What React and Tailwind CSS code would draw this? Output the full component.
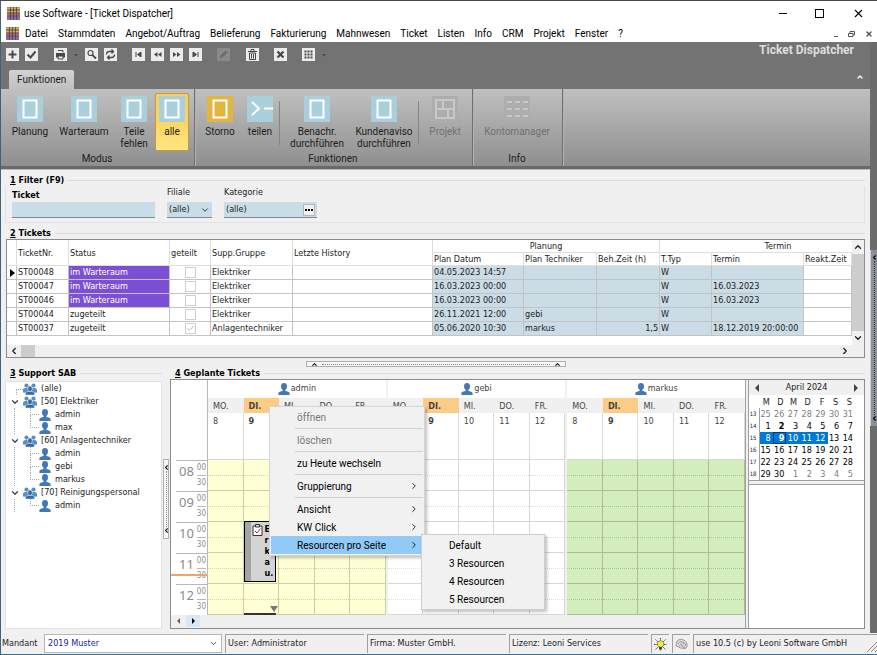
import React from 'react';
import { Check, X, ChevronDown, ChevronUp, ChevronLeft, ChevronRight } from 'lucide-react';

const MENU = ['Datei', 'Stammdaten', 'Angebot/Auftrag', 'Belieferung', 'Fakturierung', 'Mahnwesen', 'Ticket', 'Listen', 'Info', 'CRM', 'Projekt', 'Fenster', '?'];

const TICKETS = [
    { nr: 'ST00048', status: 'im Warteraum', group: 'Elektriker', date: '04.05.2023 14:57', type: 'W', current: true },
    { nr: 'ST00047', status: 'im Warteraum', group: 'Elektriker', date: '16.03.2023 00:00', type: 'W', due: '16.03.2023' },
    { nr: 'ST00046', status: 'im Warteraum', group: 'Elektriker', date: '16.03.2023 00:00', type: 'W', due: '16.03.2023' },
    { nr: 'ST00044', status: 'zugeteilt', group: 'Elektriker', date: '26.11.2021 12:00', tech: 'gebi', type: 'W' },
    { nr: 'ST00037', status: 'zugeteilt', shared: true, group: 'Anlagentechniker', date: '05.06.2020 10:30', tech: 'markus', hours: '1,5', type: 'W', due: '18.12.2019 20:00:00' },
];

const TREE = [
    { name: '(alle)' },
    { name: '[50] Elektriker', users: ['admin', 'max'] },
    { name: '[60] Anlagentechniker', users: ['admin', 'gebi', 'markus'] },
    { name: '[70] Reinigungspersonal', users: ['admin'] },
];

const HOURS = ['08', '09', '10', '11', '12'];
const DAYS = [['MO.', 8], ['DI.', 9], ['MI.', 10], ['DO.', 11], ['FR.', 12]];

const WEEKS = [
    [13, 25, 26, 27, 28, 29, 30, 31],
    [14, 1, 2, 3, 4, 5, 6, 7],
    [15, 8, 9, 10, 11, 12, 13, 14],
    [16, 15, 16, 17, 18, 19, 20, 21],
    [17, 22, 23, 24, 25, 26, 27, 28],
    [18, 29, 30, 1, 2, 3, 4, 5],
];

const AppIcon = () => (
    <svg viewBox="0 0 13 13" className="h-[13px] w-[13px] shrink-0">
        <rect width="13" height="13" fill="#8d7080" />
        <path d="M0 1.5h13M0 4.5h13" stroke="#d8b548" strokeWidth="2" />
        <path d="M0 7.5h13" stroke="#c4607a" strokeWidth="2" />
        <path d="M0 10.5h13" stroke="#8d6bb0" strokeWidth="2" />
        <path d="M3.5 0v13M6.5 0v13M9.5 0v13" stroke="#4a3f48" strokeWidth=".8" />
        <path d="M0 3h13M0 6h13M0 9h13" stroke="#4a3f48" strokeWidth=".6" />
    </svg>
);

const UserIcon = () => (
    <svg viewBox="0 0 12 12" className="h-3 w-3 shrink-0" fill="#4378b4">
        <ellipse cx="6" cy="3.4" rx="3" ry="3.4" />
        <path d="M4.6 6h2.8v2c1.8.4 4.2.9 4.2 2.2V12H.4v-1.8C.4 8.9 2.8 8.4 4.6 8z" />
    </svg>
);

const GroupIcon = () => (
    <svg viewBox="0 0 14 12" className="h-3 w-3.5 shrink-0">
        <g fill="#5b8fc4">
            <circle cx="3.5" cy="2.6" r="2.1" />
            <circle cx="10.5" cy="2.6" r="2.1" />
            <path d="M0 9.5V7c0-1.4 1.5-2 3.5-2l2 1v4zM14 9.5V7c0-1.4-1.5-2-3.5-2l-2 1v4z" />
        </g>
        <g fill="#35699f" stroke="#fff" strokeWidth=".4">
            <path d="M2.5 12v-1.5c0-1.5 2-2.1 4.5-2.1s4.5.6 4.5 2.1V12z" />
            <ellipse cx="7" cy="5.8" rx="2.2" ry="2.7" />
        </g>
    </svg>
);

const TOOL_ICONS = {
    plus: <path d="M6.5 2.5v8M2.5 6.5h8" strokeWidth="2" />,
    check: <path d="M2.5 6.5l3 3 5-6" strokeWidth="2" />,
    print: (
        <>
            <path d="M2 5h9v4.5H2z" fill="currentColor" stroke="none" />
            <path d="M4 2.5h5v2M4 8h5v3H4z" fill="#ececec" />
        </>
    ),
    search: (
        <>
            <circle cx="5.5" cy="5" r="2.5" strokeWidth="1.2" />
            <path d="M7.3 6.8l3.7 3.7" strokeWidth="1.8" />
        </>
    ),
    refresh: <path d="M2.5 6.5c0-2 1-3 3-3h4M7.500 1.500l2 2-2 2M10.500 6.500c0 2-1 3-3 3h-4M5.500 7.500l-2 2 2 2" strokeWidth="1.3" />,
    first: <path d="M4 4v5M9 4v5L5.500 6.500z" fill="currentColor" />,
    prev: <path d="M6.5 4v5L3 6.5zM10.5 4v5L7 6.5z" fill="currentColor" stroke="none" />,
    next: <path d="M3 4v5l3.5-2.5zM7 4v5l3.5-2.5z" fill="currentColor" stroke="none" />,
    last: <path d="M9 4v5M4 4v5l3.5-2.5z" fill="currentColor" />,
    edit: <path d="M3 10l1-2.5L8.5 3l1.500 1.500L5.500 9z" fill="currentColor" />,
    trash: <path d="M2 3.5h9M5 3V1.5h3V3M3.5 5v6.500h6V5zM5.500 6v4.500M7.500 6v4.500" />,
    close: <path d="M3.5 3.5l6 6M9.5 3.5l-6 6" strokeWidth="2.2" />,
    grid: <path d="M2.5 3.5h8M2.5 6.5h8M2.5 9.5h8" strokeWidth="1.8" strokeDasharray="2 1" />,
};

const ToolButton = ({ label, icon, disabled }) => (
    <button aria-label={label} disabled={disabled} className="bg-[#ececec] text-[#484848] disabled:bg-[#8a8a8a] disabled:text-[#6d6d6d]">
        <svg viewBox="0 0 13 13" fill="none" stroke="currentColor" className="h-[13px] w-[13px]">{TOOL_ICONS[icon]}</svg>
    </button>
);

const ToolArrow = () => (
    <svg viewBox="0 0 6 6" className="h-1.5 w-1.5"><path d="M1 2h4L3 4.5z" fill="#4a4a4a" /></svg>
);

const RibbonIcon = ({ kind }) => (
    <svg viewBox="0 0 26 26" className="h-[26px] w-[26px]">
        <rect width="26" height="26" fill={kind === 'gold' ? '#e3b541' : kind === 'grid' || kind === 'dots' ? '#adadad' : '#a9cfdc'} />
        {(kind === 'box' || kind === 'gold') && <rect x="6.5" y="4.5" width="13" height="17" fill="none" stroke="#fff" strokeWidth="2" />}
        {kind === 'split' && <path d="M5 6l7 6.5L5 19M17 12.5h9" fill="none" stroke="#fff" strokeWidth="2" />}
        {kind === 'grid' && <path d="M4 4h18v18H4zM4 13h18M11 4v9M16 13v9" fill="none" stroke="#c8c8c8" strokeWidth="2" />}
        {kind === 'dots' && <path d="M3 6h21M3 13h21M3 20h21" fill="none" stroke="#c8c8c8" strokeWidth="2" strokeDasharray="5 3" />}
    </svg>
);

const RibbonButton = ({ width, kind = 'box', active, disabled, children }) => (
    <button disabled={disabled} className={`flex h-[58px] flex-col items-center border pt-0.5 leading-3 disabled:text-[#717171] ${width} ${active ? 'rounded-xs border-[#c49a3a] bg-linear-to-b from-[#f3cf6c] via-[#fdd562] to-[#ffe680]' : 'border-transparent'}`}>
        <RibbonIcon kind={kind} />
        <span className="mt-1">{children}</span>
    </button>
);

const RibbonGroup = ({ label, children }) => (
    <section className="flex flex-col border-r border-[#6e6e6e] pl-1 pr-[5px] pt-1 shadow-[1px_0_0_#b5b5b5]">
        <div className="flex">{children}</div>
        <div className="text-center leading-[15px]">{label}</div>
    </section>
);

const RibbonLine = () => <div className="mr-1 mt-2 h-11 border-r border-[#848484]" />;

const Legend = ({ nr, children }) => (
    <div className="flex items-center gap-1 leading-3">
        <h2 className="pl-[5px] font-bold text-black"><span className="underline">{nr}</span> {children}</h2>
        <div className="h-px flex-1 bg-[#dcdcdc]" />
    </div>
);

const FilterBar = () => (
    <section className="pl-1 pr-[5px] pt-1">
        <Legend nr="1">Filter (F9)</Legend>
        <div className="flex items-end gap-3 border-x border-b border-[#e2e2e2] px-1.5 pb-1">
            <label className="flex flex-col justify-end font-bold text-black">
                <span className="pb-px leading-3">Ticket</span>
                <input className="h-4 w-[143px] border-b border-[#7b8b95] bg-[#cadce6] px-1 font-normal outline-none" />
            </label>
            <label className="flex flex-col">
                <span className="pb-1 leading-3">Filiale</span>
                <span className="relative flex">
                    <select className="h-4 w-[45px] appearance-none border-b border-[#7b8b95] bg-[#cadce6] pl-0.5 outline-none">
                        <option>(alle)</option>
                    </select>
                    <ChevronDown size={10} className="pointer-events-none absolute right-0.5 top-[3px]" />
                </span>
            </label>
            <label className="flex flex-col">
                <span className="pb-1 leading-3">Kategorie</span>
                <span className="flex h-4 w-[93px] items-center border-b border-[#7b8b95] bg-[#cadce6] pr-0.5">
                    <input defaultValue="(alle)" className="min-w-0 flex-1 bg-transparent pl-0.5 outline-none" />
                    <button aria-label="Kategorie auswählen" className="flex h-3 w-3 items-center justify-center gap-px border border-[#b5b5b5] bg-[#f0f0f0]">
                        <i className="h-0.5 w-0.5 bg-black" />
                        <i className="h-0.5 w-0.5 bg-black" />
                        <i className="h-0.5 w-0.5 bg-black" />
                    </button>
                </span>
            </label>
        </div>
    </section>
);

const TH = ({ children, ...rest }) => (
    <th className="border-r border-b border-[#dedede] px-px text-left font-normal" {...rest}>{children}</th>
);

const TicketTable = () => (
    <section className="pl-1 pr-[5px] pt-1">
        <Legend nr="2">Tickets</Legend>
        <div className="ml-px flex flex-col border border-[#8c8c8c] bg-white">
            <div className="flex h-[105px]">
                <div className="min-w-0 flex-1 overflow-hidden">
                    <table className="w-full table-fixed border-separate border-spacing-0 whitespace-nowrap">
                        <colgroup>
                            <col className="w-2.5" />
                            <col className="w-[52px]" />
                            <col className="w-[101px]" />
                            <col className="w-[41px]" />
                            <col className="w-[82px]" />
                            <col className="w-[140px]" />
                            <col className="w-[91px]" />
                            <col className="w-[73px]" />
                            <col className="w-[63px]" />
                            <col className="w-[52px]" />
                            <col className="w-[92px]" />
                            <col />
                        </colgroup>
                        <thead className="leading-3">
                            <tr className="h-3">
                                <TH rowSpan={2} />
                                <TH rowSpan={2}>TicketNr.</TH>
                                <TH rowSpan={2}>Status</TH>
                                <TH rowSpan={2}>geteilt</TH>
                                <TH rowSpan={2}>Supp.Gruppe</TH>
                                <TH rowSpan={2}>Letzte History</TH>
                                <th colSpan={3} className="border-r border-b border-[#dedede] p-0 font-normal">Planung</th>
                                <th colSpan={3} className="border-b border-[#dedede] p-0 pl-11 font-normal">Termin</th>
                            </tr>
                            <tr className="h-3">
                                <TH>Plan Datum</TH>
                                <TH>Plan Techniker</TH>
                                <TH>Beh.Zeit (h)</TH>
                                <TH>T.Typ</TH>
                                <TH>Termin</TH>
                                <TH>Reakt.Zeit</TH>
                            </tr>
                        </thead>
                        <tbody className="leading-[13px] [&_td]:border-r [&_td]:border-b [&_td]:border-[#c3c3c3] [&_td]:px-px [&_td]:py-0">
                            {TICKETS.map((t) => (
                                <tr key={t.nr}>
                                    <td>{t.current && <svg viewBox="0 0 5 8" className="ml-0.5 h-2 w-[5px]"><path d="M0 0l5 4-5 4z" /></svg>}</td>
                                    <td>{t.nr}</td>
                                    <td className={t.status === 'zugeteilt' ? '' : 'bg-[#7c4fd6] text-white'}>{t.status}</td>
                                    <td>
                                        <span className="relative mx-auto flex h-[11px] w-[11px]">
                                            <input type="checkbox" aria-label={`${t.nr} geteilt`} defaultChecked={t.shared} className="h-[11px] w-[11px] appearance-none border border-[#cfcfcf] bg-white" />
                                            {t.shared && <Check size={9} className="pointer-events-none absolute left-px top-px text-[#9c9c9c]" />}
                                        </span>
                                    </td>
                                    <td>{t.group}</td>
                                    <td />
                                    <td className="bg-[#cadce6]">{t.date}</td>
                                    <td className="bg-[#cadce6]">{t.tech}</td>
                                    <td className="bg-[#cadce6] text-right">{t.hours}</td>
                                    <td className="bg-[#cadce6]">{t.type}</td>
                                    <td className="bg-[#cadce6]">{t.due}</td>
                                    <td />
                                </tr>
                            ))}
                        </tbody>
                    </table>
                </div>
                <div className="flex w-3 flex-col items-center bg-[#f0f0f0]">
                    <ChevronUp size={10} strokeWidth={3} className="my-0.5" />
                    <div className="w-full flex-1 bg-[#cdcdcd]" />
                    <ChevronDown size={10} strokeWidth={3} className="my-0.5" />
                </div>
            </div>
            <div className="flex h-3 items-center bg-[#f0f0f0] px-0.5">
                <ChevronLeft size={10} strokeWidth={3} />
                <div className="ml-0.5 h-full w-3.5 bg-[#cdcdcd]" />
                <ChevronRight size={10} strokeWidth={3} className="ml-auto mr-3" />
            </div>
        </div>
    </section>
);

const SupportTree = () => (
    <section className="flex w-[157px] flex-col">
        <Legend nr="3">Support SAB</Legend>
        <ul className="mt-0.5 flex-1 border border-[#e2e2e2] bg-white leading-[13px]">
            {TREE.map((g) => (
                <li key={g.name}>
                    <div className="flex items-center">
                        <span className="flex w-[17px] justify-center">
                            {g.users
                                ? <ChevronDown size={10} strokeWidth={3} className="text-[#444]" />
                                : <i className="mt-1.5 ml-2.5 h-1.5 w-2 border-t border-l border-dotted border-[#aaa]" />}
                        </span>
                        <GroupIcon />
                        <span className="ml-1">{g.name}</span>
                    </div>
                    {g.users && (
                        <ul className="ml-2 border-l border-dotted border-[#aaa] pl-[15px]">
                            {g.users.map((u, i) => (
                                <li key={u} className="flex items-center">
                                    <span className="flex h-[13px] w-[9px] flex-col">
                                        <i className="h-[7px] border-b border-l border-dotted border-[#aaa]" />
                                        {i < g.users.length - 1 && <i className="h-1.5 border-l border-dotted border-[#aaa]" />}
                                    </span>
                                    <UserIcon />
                                    <span className="ml-1">{u}</span>
                                </li>
                            ))}
                        </ul>
                    )}
                </li>
            ))}
        </ul>
    </section>
);

const Appointment = () => (
    <>
        <div className="absolute left-0 top-[61px] flex h-[61px] w-8 border border-black bg-[#d4d4d4] font-bold text-black">
            <div className="w-1.5 bg-[#a5a5a5]" />
            <svg viewBox="0 0 11 12" className="ml-px mt-0.5 h-3 w-[11px] shrink-0">
                <path d="M1 2h9v9.5H1z" fill="#fff" stroke="#333" />
                <path d="M3.5 .5h4v2.5h-4z" fill="#ddd" stroke="#333" />
                <path d="M3 7l2 2 3.5-4.5" fill="none" stroke="#b03030" />
            </svg>
            <div className="ml-0.5 w-2 pt-0.5 leading-[11px]">E<br />r<br />k<br />a<br />u.</div>
        </div>
        <div className="absolute bottom-0 left-0 h-0.5 w-8 bg-[#333]" />
        <svg viewBox="0 0 8 6" className="absolute bottom-[3px] left-[26px] h-1.5 w-2"><path d="M0 0h8L4 6z" fill="#777" /></svg>
    </>
);

const Resource = ({ name, cell, hourLine, halfLine, children }) => (
    <div className="flex min-w-0 flex-1 flex-col">
        <div className="flex h-[18px] items-center justify-center gap-px bg-white">
            <UserIcon />
            <span>{name}</span>
        </div>
        <div className="grid flex-1 grid-cols-5">
            {DAYS.map(([day, nr]) => (
                <div key={day} className="flex flex-col">
                    <div className={`h-[15px] pl-[5px] leading-4 ${nr === 9 ? 'bg-[#fccb85] font-bold' : 'bg-[#f0f0f0]'}`}>{day}</div>
                    <div className={`h-[47px] border-r border-b border-[#d9d9d9] bg-white pl-[5px] leading-4 ${nr === 9 ? 'font-bold' : ''}`}>{nr}</div>
                    <div className={`relative border-r ${cell} ${hourLine}`}>
                        {HOURS.map((h) => (
                            <div key={h} className={`h-[31px] border-b ${hourLine}`}>
                                <div className={`h-4 border-b border-dotted ${halfLine}`} />
                            </div>
                        ))}
                        {nr === 9 && children}
                    </div>
                </div>
            ))}
        </div>
    </div>
);

const TimeRuler = () => (
    <div className="flex w-[37px] flex-col border-r border-[#b8b8b8] bg-white text-[#8b8b8b]">
        <div className="h-20" />
        <div className="relative pl-[5px]">
            {HOURS.map((h) => (
                <div key={h} className="flex h-[31px] border-t border-[#b8b8b8] pl-[3px]">
                    <span className="font-['Noto_Sans',sans-serif] text-[13px] leading-5">{h}</span>
                    <span className="ml-auto pr-px text-[8px]">
                        <span className="block h-[15px] border-b border-[#b8b8b8] leading-[14px]">00</span>
                        <span className="block leading-[14px]">30</span>
                    </span>
                </div>
            ))}
            <div className="absolute left-0 top-[114px] h-0.5 w-full bg-[#f2a36c]" />
        </div>
    </div>
);

const Calendar = () => (
    <div className="flex w-[116px] flex-col border-l border-[#a0a0a0]">
        <div className="border-b border-[#a0a0a0] bg-white">
            <div className="flex h-[15px] items-center justify-between bg-[#f0f0f0] px-1.5">
                <button aria-label="Voriger Monat"><svg viewBox="0 0 4 8" className="h-2 w-1"><path d="M4 0v8L0 4z" fill="#444" /></svg></button>
                <span>April 2024</span>
                <button aria-label="Nächster Monat"><svg viewBox="0 0 4 8" className="h-2 w-1"><path d="M0 0v8l4-4z" fill="#444" /></svg></button>
            </div>
            <table className="w-[106px] table-fixed text-right leading-3 [&_td]:p-0 [&_td]:pr-0.5 [&_th]:p-0 [&_th]:pr-[3px] [&_th]:font-normal">
                <thead>
                    <tr className="h-[13px]">
                        <th className="w-2.5" />
                        {['M', 'D', 'M', 'D', 'F', 'S', 'S'].map((d, i) => <th key={i}>{d}</th>)}
                    </tr>
                </thead>
                <tbody>
                    {WEEKS.map(([week, ...days]) => (
                        <tr key={week} className="h-3">
                            <td className="border-r border-[#a0a0a0] text-[6px]">{week}</td>
                            {days.map((d, i) => {
                                const outside = (week === 13) || (week === 18 && d < 20);
                                const selected = week === 15 && d < 13;
                                return (
                                    <td key={i} className={`${outside ? 'text-[#808080]' : selected ? 'bg-[#0078d7] text-white' : 'text-black'} ${!outside && (d === 2 || d === 9) ? 'font-bold' : ''} ${d === 9 ? 'outline -outline-offset-1 outline-[#1b2f6b]' : ''}`}>{d}</td>
                                );
                            })}
                        </tr>
                    ))}
                </tbody>
            </table>
        </div>
        <div className="mt-[3px] flex-1 border-t border-[#a0a0a0] bg-white" />
    </div>
);

const MenuItem = ({ children, sub, active, disabled }) => (
    <button role="menuitem" disabled={disabled} className={`flex h-[18px] w-full items-center pl-[26px] pr-1 text-left disabled:text-[#777] ${active ? 'bg-[#91c9f7]' : ''}`}>
        {children}
        {sub && <ChevronRight size={10} className="ml-auto" />}
    </button>
);

const MenuLine = () => <div className="ml-6 h-[5px] py-0.5"><div className="h-px bg-[#d0d0d0]" /></div>;

const ContextMenu = () => (
    <div className="absolute left-[98px] top-[26px] font-['Roboto','Noto_Sans',sans-serif] text-[10px] text-black">
        <div role="menu" className="w-[156px] border border-[#d5d5d5] bg-[#f1f1f1] p-px shadow-[2px_2px_3px_rgba(0,0,0,0.25)]">
            <MenuItem disabled>öffnen</MenuItem>
            <MenuLine />
            <MenuItem disabled>löschen</MenuItem>
            <MenuLine />
            <MenuItem>zu Heute wechseln</MenuItem>
            <MenuLine />
            <MenuItem sub>Gruppierung</MenuItem>
            <MenuLine />
            <MenuItem sub>Ansicht</MenuItem>
            <MenuItem sub>KW Click</MenuItem>
            <MenuItem sub active>Resourcen pro Seite</MenuItem>
        </div>
        <div role="menu" className="absolute left-[152px] top-[128px] w-[124px] border border-[#cfcfcf] bg-[#f1f1f1] p-px shadow-[2px_2px_3px_rgba(0,0,0,0.25)]">
            <MenuItem>Default</MenuItem>
            <MenuItem>3 Resourcen</MenuItem>
            <MenuItem>4 Resourcen</MenuItem>
            <MenuItem>5 Resourcen</MenuItem>
        </div>
    </div>
);

const Scheduler = () => (
    <section className="flex min-w-0 flex-1 flex-col">
        <Legend nr="4">Geplante Tickets</Legend>
        <div className="relative flex flex-1 border border-[#8c8c8c] bg-[#f0f0f0]">
            <div className="flex min-w-0 flex-1 flex-col">
                <div className="flex text-[#444]">
                    <TimeRuler />
                    <div className="flex min-w-0 flex-1 gap-0.5">
                        <Resource name="admin" cell="bg-[#ffffd5]" hourLine="border-[#cfcfa6]" halfLine="border-[#d5d5ae]">
                            <Appointment />
                        </Resource>
                        <Resource name="gebi" cell="bg-white" hourLine="border-[#d6d6d6]" halfLine="border-[#dddddd]" />
                        <Resource name="markus" cell="bg-[#d4edbc]" hourLine="border-[#a9be95]" halfLine="border-[#a9be95]" />
                    </div>
                </div>
                <div className="flex h-3 items-center pl-1">
                    <button aria-label="Zurück" className="px-0.5"><svg viewBox="0 0 3 6" className="h-1.5 w-[3px]"><path d="M3 0v6L0 3z" fill="#666" /></svg></button>
                    <button aria-label="Weiter" className="ml-1 flex h-3 w-3.5 items-center justify-center bg-[#d9e8f5]"><svg viewBox="0 0 3 6" className="h-1.5 w-[3px]"><path d="M0 0v6l3-3z" /></svg></button>
                </div>
            </div>
            <div className="w-[3px] border-l border-[#a0a0a0]" />
            <Calendar />
            <ContextMenu />
        </div>
    </section>
);

const StatusCell = ({ width, children }) => (
    <div className={`flex h-[19px] items-center border-t border-l border-[#a0a0a0] pl-0.5 ${width}`}>{children}</div>
);

const StatusBar = () => (
    <footer className="flex h-[22px] items-center gap-[3px] border-b border-[#3f6f86] bg-[#f0f0f0]">
        <label htmlFor="mandant" className="w-10 pl-px">Mandant</label>
        <div className="relative flex">
            <select id="mandant" className="h-[19px] w-[178px] appearance-none border border-[#b5b5b5] bg-white pl-[3px] text-[#1a1aa8] outline-none">
                <option>2019 Muster</option>
            </select>
            <ChevronDown size={9} className="pointer-events-none absolute right-1 top-[5px]" />
        </div>
        <StatusCell width="w-[139px]">User: Administrator</StatusCell>
        <StatusCell width="w-[139px]">Firma: Muster GmbH.</StatusCell>
        <StatusCell width="w-[139px]">Lizenz: Leoni Services</StatusCell>
        <StatusCell width="w-[18px]">
            <svg viewBox="0 0 13 13" className="h-[13px] w-[13px]">
                <path d="M6.5 0v13M1.5 1.5l10 10M11.5 1.5l-10 10M0 6.5h13" stroke="#444" strokeDasharray="1.5 1" />
                <circle cx="6.5" cy="6" r="3.3" fill="#f5ea4a" stroke="#77701f" strokeWidth=".7" />
                <path d="M5 9h3v2.5H5z" fill="#444" />
            </svg>
        </StatusCell>
        <StatusCell width="w-[18px]">
            <svg viewBox="0 0 13 13" className="h-[13px] w-[13px]" fill="none" stroke="#858585" strokeWidth=".8">
                <path d="M1.5 8C0 4 3 1 6.5 1.5c4 .5 6 3 5.5 7l-1.5 2-5-.5z" fill="#dcdcdc" />
                <path d="M3 6c1-3 5-3 6 0M4.5 8c0-2 3-2 3 0M6.5 8l4.5 2.5M8 4.5c2 .5 3 2 3 4" />
            </svg>
        </StatusCell>
        <StatusCell width="flex-1">
            use 10.5 (c) by Leoni Software GmbH
            <svg viewBox="0 0 10 10" className="ml-auto mt-1.5 h-2.5 w-2.5"><path d="M0 10L10 0M4 10l6-6M8 10l2-2" stroke="#888" /></svg>
        </StatusCell>
    </footer>
);

const App = () => {
    return (
        <div className="flex min-h-screen flex-col border-t border-l border-t-[#4d4648] border-l-[#3d6478] bg-[#f0f0f0] font-['DejaVu_Sans_Condensed','Noto_Sans',sans-serif] text-[9px] text-[#1c1c1c]">
            <div className="bg-white font-['Roboto','Noto_Sans',sans-serif] text-[10px] text-black">
                <header className="flex h-6 items-center pl-1.5">
                    <AppIcon />
                    <h1 className="ml-1">use Software - [Ticket Dispatcher]</h1>
                    <div className="ml-auto flex items-center gap-7 pr-3">
                        <button aria-label="Minimieren" className="h-px w-2 bg-black" />
                        <button aria-label="Maximieren" className="h-[9px] w-[9px] border border-black" />
                        <button aria-label="Schließen"><X size={13} strokeWidth={2} /></button>
                    </div>
                </header>
                <nav className="flex h-[17px] items-center pl-[5px]">
                    <AppIcon />
                    <div className="ml-1.5 flex gap-2.5">
                        {MENU.map((m) => <button key={m}>{m}</button>)}
                    </div>
                    <div className="ml-auto flex items-center gap-2.5 pr-1 text-[#555]">
                        <button aria-label="Fenster minimieren" className="mt-1.5 h-px w-1 bg-[#555]" />
                        <button aria-label="Fenster wiederherstellen">
                            <svg viewBox="0 0 7 6" className="h-1.5 w-[7px]"><path d="M2 2V.5h4.5V4H5M.5 2.5H5v3H.5z" fill="none" stroke="#555" /></svg>
                        </button>
                        <button aria-label="Fenster schließen"><X size={8} strokeWidth={4} /></button>
                    </div>
                </nav>
            </div>
            <div className="flex flex-1">
                <div className="flex min-w-0 flex-1 flex-col">
                    <div className="bg-[#737373] font-['Roboto','Noto_Sans',sans-serif] text-[10px]">
                        <div className="flex h-7 items-start pl-[5px]">
                            <div className="flex items-center gap-1.5 pt-1.5">
                                <ToolButton label="Neu" icon="plus" />
                                <ToolButton label="Speichern" icon="check" />
                                <span className="w-1" />
                                <ToolButton label="Drucken" icon="print" />
                                <ToolArrow />
                                <ToolButton label="Suchen" icon="search" />
                                <ToolButton label="Aktualisieren" icon="refresh" />
                                <span className="w-[3px]" />
                                <ToolButton label="Erster" icon="first" />
                                <ToolButton label="Voriger" icon="prev" />
                                <ToolButton label="Nächster" icon="next" />
                                <ToolButton label="Letzter" icon="last" />
                                <span className="w-[3px]" />
                                <ToolButton label="Bearbeiten" icon="edit" disabled />
                                <span className="w-1" />
                                <ToolButton label="Löschen" icon="trash" />
                                <span className="w-[3px]" />
                                <ToolButton label="Abbrechen" icon="close" />
                                <span className="w-[3px]" />
                                <ToolButton label="Ansicht" icon="grid" />
                                <ToolArrow />
                            </div>
                            <div className="ml-auto pr-4 text-[12px] font-bold leading-4 text-[#dedede]">Ticket Dispatcher</div>
                        </div>
                        <div className="flex h-[19px] items-end pl-2">
                            <button className="h-[19px] rounded-t-xs bg-linear-to-b from-[#d2d2d2] to-[#c0c0c0] px-2">Funktionen</button>
                            <ChevronUp size={8} strokeWidth={4} className="mb-2 ml-auto mr-1.5 text-white" />
                        </div>
                        <div className="flex h-[77px] bg-linear-to-b from-[#c0c0c0] to-[#8f8f8f]">
                            <RibbonGroup label="Modus">
                                <RibbonButton width="w-[50px]">Planung</RibbonButton>
                                <RibbonButton width="w-[58px]">Warteraum</RibbonButton>
                                <RibbonButton width="w-[42px]">Teile<br />fehlen</RibbonButton>
                                <RibbonButton width="w-[34px]" active>alle</RibbonButton>
                            </RibbonGroup>
                            <RibbonGroup label="Funktionen">
                                <RibbonButton width="w-[42px]" kind="gold">Storno</RibbonButton>
                                <RibbonButton width="w-[38px]" kind="split">teilen</RibbonButton>
                                <RibbonLine />
                                <RibbonButton width="w-[66px]">Benachr.<br />durchführen</RibbonButton>
                                <RibbonButton width="w-[68px]">Kundenaviso<br />durchführen</RibbonButton>
                                <RibbonLine />
                                <RibbonButton width="w-[44px]" kind="grid" disabled>Projekt</RibbonButton>
                            </RibbonGroup>
                            <RibbonGroup label="Info">
                                <RibbonButton width="w-[80px]" kind="dots" disabled>Kontomanager</RibbonButton>
                            </RibbonGroup>
                        </div>
                        <div className="h-1 border-b border-[#bdbdbd] bg-[#696969]" />
                    </div>
                    <FilterBar />
                    <TicketTable />
                    <button aria-label="Tabelle einklappen" className="mx-auto mt-[3px] flex h-1.5 w-[260px] items-center gap-1 border border-[#b0b0b0] bg-[#f7f7f7] px-1">
                        <ChevronUp size={7} strokeWidth={4} />
                        <i className="flex-1 border-t border-dotted border-[#888]" />
                        <ChevronUp size={7} strokeWidth={4} />
                    </button>
                    <div className="flex flex-1 pb-1 pl-1 pr-[5px]">
                        <SupportTree />
                        <button aria-label="Baum einklappen" className="mx-px mt-[92px] flex h-20 w-1.5 flex-col items-center justify-between border border-[#b0b0b0] bg-[#f7f7f7] py-1">
                            <ChevronLeft size={7} strokeWidth={4} className="shrink-0" />
                            <i className="flex-1 border-l border-dotted border-[#888]" />
                            <ChevronLeft size={7} strokeWidth={4} className="shrink-0" />
                        </button>
                        <Scheduler />
                    </div>
                </div>
                <div className="flex w-[7px] flex-col bg-[#6c6c6c] pt-52">
                    <button aria-label="Seitenleiste ausklappen" className="flex h-44 flex-col items-center justify-between border-l border-[#d0d0d0] bg-[#8b9096] py-1 text-black">
                        <ChevronLeft size={7} strokeWidth={4} />
                        <i className="flex-1 border-l border-dotted border-[#333]" />
                        <ChevronLeft size={7} strokeWidth={4} />
                    </button>
                </div>
            </div>
            <StatusBar />
        </div>
    );
}

export default App;
